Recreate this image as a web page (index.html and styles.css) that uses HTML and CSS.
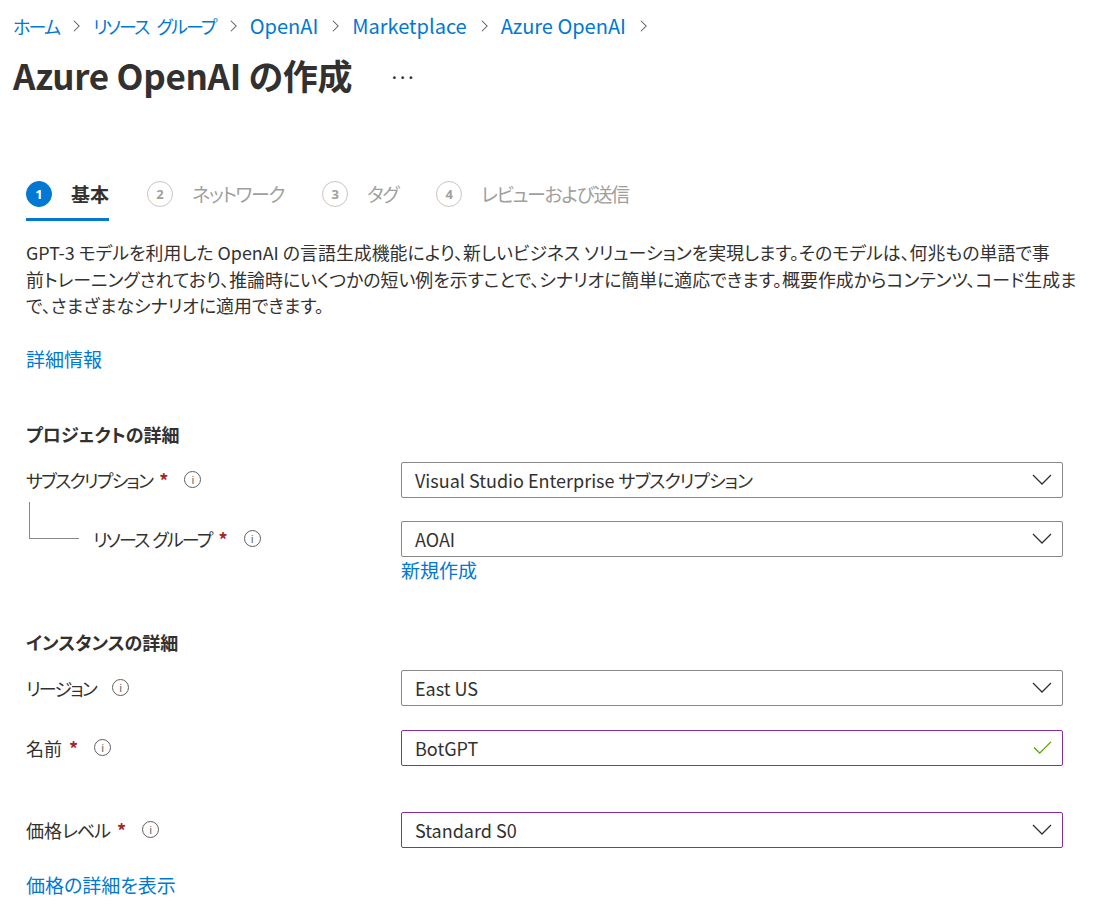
FILE: index.html
```html
<!DOCTYPE html>
<html lang="ja">
<head>
<meta charset="utf-8">
<link rel="stylesheet" href="styles.css">
</head>
<body>
<nav class="crumbs">
  <a class="ck">ホーム</a><span class="sep"><svg viewBox="0 0 10 16" width="9" height="14"><path d="M2 2l6 6-6 6" fill="none" stroke="#605e5c" stroke-width="1.2"/></svg></span>
  <a class="ck">リソース<span class="sp"></span>グループ</a><span class="sep"><svg viewBox="0 0 10 16" width="9" height="14"><path d="M2 2l6 6-6 6" fill="none" stroke="#605e5c" stroke-width="1.2"/></svg></span>
  <a>OpenAI</a><span class="sep"><svg viewBox="0 0 10 16" width="9" height="14"><path d="M2 2l6 6-6 6" fill="none" stroke="#605e5c" stroke-width="1.2"/></svg></span>
  <a>Marketplace</a><span class="sep"><svg viewBox="0 0 10 16" width="9" height="14"><path d="M2 2l6 6-6 6" fill="none" stroke="#605e5c" stroke-width="1.2"/></svg></span>
  <a>Azure OpenAI</a><span class="sep"><svg viewBox="0 0 10 16" width="9" height="14"><path d="M2 2l6 6-6 6" fill="none" stroke="#605e5c" stroke-width="1.2"/></svg></span>
</nav>
<header class="title-row">
  <h1>Azure OpenAI の作成</h1>
  <span class="more">···</span>
</header>

<main class="content">
  <div class="tabs">
    <div class="tab active"><span class="num">1</span><span class="tab-label">基本</span></div>
    <div class="tab"><span class="num">2</span><span class="tab-label">ネットワーク</span></div>
    <div class="tab"><span class="num">3</span><span class="tab-label">タグ</span></div>
    <div class="tab"><span class="num">4</span><span class="tab-label">レビューおよび送信</span></div>
  </div>

  <p class="desc">GPT-3 モデルを利用した OpenAI の言語生成機能により、新しいビジネス ソリューションを実現します。そのモデルは、何兆もの単語で事<br>前トレーニングされており、推論時にいくつかの短い例を示すことで、シナリオに簡単に適応できます。概要作成からコンテンツ、コード生成ま<br>で、さまざまなシナリオに適用できます。</p>

  <a class="link more-info">詳細情報</a>

  <h2 class="section first">プロジェクトの詳細</h2>

  <div class="row">
    <div class="label"><span class="kana">サブスクリプション</span><span class="req">*</span><span class="info">i</span></div>
    <div class="control select"><span>Visual Studio Enterprise <span class="kana-s">サブスクリプション</span></span><svg class="chev" viewBox="0 0 20 12" width="20" height="12"><path d="M1 1l9 9 9-9" fill="none" stroke="#323130" stroke-width="1.3"/></svg></div>
  </div>

  <div class="row sub">
    <div class="label nested"><span class="tree"></span><span class="kana">リソース<span class="sp"></span>グループ</span><span class="req">*</span><span class="info">i</span></div>
    <div class="control-wrap">
      <div class="control select"><span>AOAI</span><svg class="chev" viewBox="0 0 20 12" width="20" height="12"><path d="M1 1l9 9 9-9" fill="none" stroke="#323130" stroke-width="1.3"/></svg></div>
      <a class="link new">新規作成</a>
    </div>
  </div>

  <h2 class="section second">インスタンスの詳細</h2>

  <div class="row region">
    <div class="label"><span class="kana">リージョン</span><span class="info">i</span></div>
    <div class="control select"><span>East US</span><svg class="chev" viewBox="0 0 20 12" width="20" height="12"><path d="M1 1l9 9 9-9" fill="none" stroke="#323130" stroke-width="1.3"/></svg></div>
  </div>

  <div class="row name">
    <div class="label">名前<span class="req">*</span><span class="info">i</span></div>
    <div class="control input edited"><span>BotGPT</span><svg class="check" viewBox="0 0 20 16" width="19" height="15"><path d="M1 8l6 6L19 2" fill="none" stroke="#57a300" stroke-width="1.5"/></svg></div>
  </div>

  <div class="row price">
    <div class="label">価格<span class="kana-s">レベル</span><span class="req">*</span><span class="info">i</span></div>
    <div class="control select edited"><span>Standard S0</span><svg class="chev" viewBox="0 0 20 12" width="20" height="12"><path d="M1 1l9 9 9-9" fill="none" stroke="#323130" stroke-width="1.3"/></svg></div>
  </div>

  <a class="link price-link">価格の詳細を表示</a>
</main>
</body>
</html>
```

FILE: styles.css
```css
* { box-sizing: border-box; }
html, body { margin: 0; padding: 0; background: #fff; }
body {
  font-family: "Noto Sans CJK JP", "Noto Sans", sans-serif;
  font-feature-settings: "palt";
  color: #323130;
  font-size: 18px;
  width: 1115px;
  height: 913px;
  overflow: hidden;
}
a { text-decoration: none; }
.link, .crumbs a { color: #0078d4; }
.kana { letter-spacing: -1.8px; }
.kana-s { letter-spacing: -1px; }
.sp { display: inline-block; width: 4px; }

.crumbs {
  display: flex;
  align-items: center;
  padding: 12px 0 0 13px;
  height: 40px;
  font-size: 20px;
  line-height: 26px;
}
.crumbs .ck { font-size: 18px; letter-spacing: -1.8px; }
.crumbs .ck .sp { width: 8px; }
.crumbs .sep { display: inline-flex; align-items: center; margin: 0 12px 0 13px; }

.title-row {
  display: flex;
  align-items: center;
  padding-left: 13px;
  margin-top: 15px;
  height: 40px;
}
h1 {
  margin: 0;
  font-size: 35px;
  font-weight: 700;
  line-height: 40px;
  letter-spacing: -0.3px;
}
.more {
  margin-left: 38px;
  font-size: 14px;
  font-weight: 700;
  color: #323130;
  letter-spacing: 0;
  position: relative;
  top: 2px;
}

.content { padding-left: 26px; width: 1063px; }

.tabs {
  display: flex;
  gap: 38px;
  margin-top: 85px;
}
.tab {
  display: flex;
  align-items: center;
  gap: 19px;
  padding-top: 1px;
  padding-bottom: 11px;
  border-bottom: 3px solid transparent;
  color: #a19f9d;
  font-size: 19px;
  line-height: 26px;
}
.tab .tab-label { letter-spacing: -1.4px; }
.tab.active { border-bottom-color: #0078d4; color: #323130; font-weight: 700; }
.tab.active .tab-label { letter-spacing: 0; }
.num {
  width: 26px;
  height: 26px;
  border-radius: 50%;
  border: 1.5px solid #c8c6c4;
  display: flex;
  align-items: center;
  justify-content: center;
  font-size: 13px;
  font-weight: 700;
  color: #a19f9d;
  font-family: "Noto Sans", sans-serif;
  letter-spacing: 0;
}
.tab.active .num { background: #0078d4; border-color: #0078d4; color: #fff; }

.desc {
  margin: 18px 0 0;
  font-size: 17.9px;
  line-height: 26.5px;
  white-space: nowrap;
}
.more-info { display: block; margin-top: 27px; line-height: 26px; font-size: 19px; }

.section {
  margin: 0;
  font-size: 18px;
  font-weight: 700;
  line-height: 26px;
}
.section.first { margin-top: 49px; }
.section.second { margin-top: 46px; }

.row {
  display: grid;
  grid-template-columns: 375px 662px;
  align-items: start;
}
.section.first + .row { margin-top: 15px; }
.row.region { margin-top: 15px; }
.row.sub { margin-top: 23px; }
.row.name { margin-top: 24px; }
.row.price { margin-top: 46px; }

.label {
  display: flex;
  align-items: center;
  height: 36px;
  line-height: 26px;
  position: relative;
}
.label.nested { padding-left: 67px; }
.tree {
  position: absolute;
  left: 3px;
  top: -19px;
  width: 50px;
  height: 37px;
  border-left: 1px solid #8a8886;
  border-bottom: 1px solid #8a8886;
}
.req { color: #a4262c; margin-left: 7px; font-weight: 700; letter-spacing: 0; }
.info {
  width: 17px;
  height: 17px;
  border: 1px solid #605e5c;
  border-radius: 50%;
  display: inline-flex;
  align-items: center;
  justify-content: center;
  font-size: 11px;
  line-height: 1;
  color: #605e5c;
  margin-left: 16px;
  font-family: "Noto Sans", sans-serif;
  letter-spacing: 0;
}

.control {
  height: 36px;
  border: 1px solid #8a8886;
  border-radius: 2px;
  display: flex;
  align-items: center;
  justify-content: space-between;
  padding: 0 10px 0 13px;
  font-size: 18px;
  line-height: 26px;
}
.control.edited { border-color: #8a2da5; }
.control-wrap { display: flex; flex-direction: column; }
.new { line-height: 26px; margin-top: 0; font-size: 19px; }

.price-link { display: block; margin-top: 24px; line-height: 26px; font-size: 19px; }
```
